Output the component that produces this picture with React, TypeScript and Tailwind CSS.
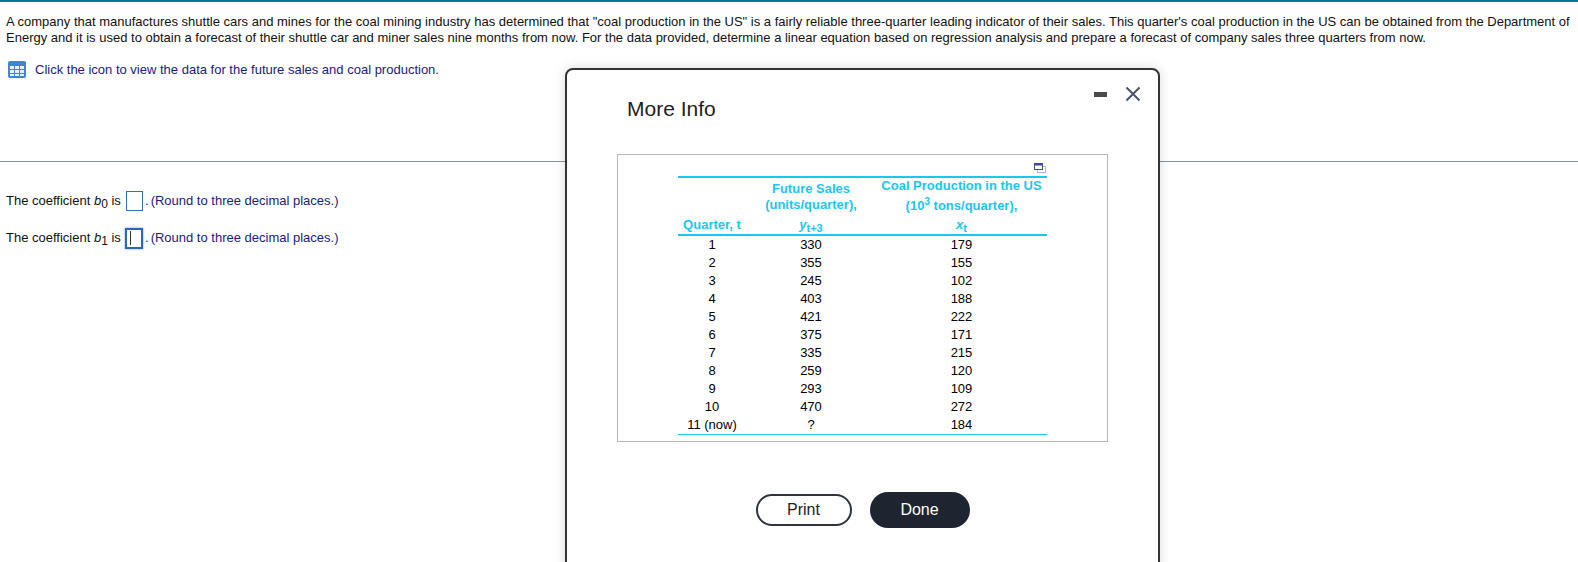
import React from 'react';

const rows = [
  ['1', '330', '179'],
  ['2', '355', '155'],
  ['3', '245', '102'],
  ['4', '403', '188'],
  ['5', '421', '222'],
  ['6', '375', '171'],
  ['7', '335', '215'],
  ['8', '259', '120'],
  ['9', '293', '109'],
  ['10', '470', '272'],
  ['11 (now)', '?', '184'],
];

const GridIcon = () => (
  <svg width="18" height="17" viewBox="0 0 18 17" className="shrink-0">
    <rect x="0" y="0" width="18" height="17" rx="2" fill="#3d85d8" />
    <g fill="#e8f1fb">
      <rect x="2" y="5" width="4" height="3" />
      <rect x="7" y="5" width="4" height="3" />
      <rect x="12" y="5" width="4" height="3" />
      <rect x="2" y="9" width="4" height="3" />
      <rect x="7" y="9" width="4" height="3" />
      <rect x="12" y="9" width="4" height="3" />
      <rect x="2" y="13" width="4" height="2" />
      <rect x="7" y="13" width="4" height="2" />
      <rect x="12" y="13" width="4" height="2" />
    </g>
  </svg>
);

const Coefficient = ({ sub, focused }: { sub: string; focused?: boolean }) => (
  <div className="flex h-[20px] items-center pl-[6px]">
    <span className="w-[115px] shrink-0 whitespace-nowrap text-[#111]">
      The coefficient <i>b</i>
      <sub className="text-[12px]">{sub}</sub> is
    </span>
    {focused ? (
      <span className="ml-[4px] flex h-[21px] w-[18px] items-center border-2 border-[#2f66b8] pl-[3px] shadow-[0_0_2px_#6c93d0]">
        <span className="h-[14px] w-px bg-[#333]" />
      </span>
    ) : (
      <span className="ml-[5px] h-[20px] w-[17px] border border-[#2f6fc4]" />
    )}
    <span className="ml-[2px] text-[#1a1a80]">
      <span>.</span>
      <span className="ml-[2px]">(Round to three decimal places.)</span>
    </span>
  </div>
);

const CopyIcon = () => (
  <svg width="12" height="10" viewBox="0 0 12 10">
    <rect x="3.5" y="3.5" width="8" height="6" fill="none" stroke="#b3b8d8" />
    <rect x="0.5" y="0.5" width="8" height="6" fill="#fff" stroke="#3f4a9e" />
    <rect x="0.5" y="0.5" width="8" height="2" fill="#3f4a9e" />
  </svg>
);

const MoreInfo = () => (
  <div className="absolute left-[565px] top-[68px] flex h-[520px] w-[595px] flex-col rounded-[8px] border-2 border-[#333] bg-white shadow-[0_0_12px_rgba(0,0,0,0.15)]">
    <div className="flex items-start justify-between pl-[60px] pr-[17px] pt-[26px]">
      <h2 className="text-[21px] leading-[26px] text-[#222]">More Info</h2>
      <div className="-mt-[10px] flex items-center gap-[18px]">
        <span className="h-[5px] w-[13px] bg-[#4a4a4a]" />
        <svg width="16" height="16" viewBox="0 0 16 16" stroke="#4a5568" strokeWidth="2" fill="none">
          <path d="M1.5 1.5 14.5 14.5M14.5 1.5 1.5 14.5" />
        </svg>
      </div>
    </div>
    <div className="ml-[50px] mt-[32px] h-[288px] w-[491px] border border-[#b8b8b8] pl-[60px] pt-[8px]">
      <div className="flex h-[13px] w-[369px] justify-end pr-[1px]">
        <CopyIcon />
      </div>
      <table className="w-[369px] table-fixed border-collapse text-center text-[13px] leading-[18px] text-black">
        <thead className="border-b-2 border-t-2 border-[#1ac6f2] text-[#1ac6f2]">
          <tr className="h-[58px] align-bottom">
            <th className="w-[68px] font-bold">Quarter, t</th>
            <th className="w-[130px] font-bold">
              <div className="leading-[16px]">Future Sales</div>
              <div className="mb-[3px] leading-[16px]">(units/quarter),</div>
              <div className="leading-[18px]">
                <i>y</i>
                <sub className="text-[11px]">t+3</sub>
              </div>
            </th>
            <th className="font-bold">
              <div className="mb-[5px] leading-[15px]">Coal Production in the US</div>
              <div className="mb-[2px] leading-[16px]">
                (10<sup className="text-[10px]">3</sup> tons/quarter),
              </div>
              <div className="leading-[18px]">
                <i>x</i>
                <sub className="text-[11px]">t</sub>
              </div>
            </th>
          </tr>
        </thead>
        <tbody className="border-b border-[#1ac6f2]">
          {rows.map((row) => (
            <tr key={row[0]} className="h-[18px]">
              <td>{row[0]}</td>
              <td>{row[1]}</td>
              <td>{row[2]}</td>
            </tr>
          ))}
        </tbody>
      </table>
    </div>
    <div className="mt-[50px] flex items-center justify-center gap-[18px]">
      <button className="h-[32px] w-[96px] rounded-full border-2 border-[#2d3340] bg-white text-[16px] text-[#222]">
        Print
      </button>
      <button className="h-[36px] w-[100px] rounded-full bg-[#1e2530] text-[16px] text-white">Done</button>
    </div>
  </div>
);

export default function App() {
  return (
    <div className="relative h-[562px] w-[1578px] overflow-hidden bg-white font-['Liberation_Sans',Arial,sans-serif] text-[13px] leading-[16px]">
      <div className="h-[2px] bg-[#00769f]" />
      <div className="px-[6px] pt-[12px] text-[#111]">
        <p>
          A company that manufactures shuttle cars and mines for the coal mining industry has determined that "coal
          production in the US" is a fairly reliable three-quarter leading indicator of their sales. This quarter's
          coal production in the US can be obtained from the Department of Energy and it is used to obtain a forecast
          of their shuttle car and miner sales nine months from now. For the data provided, determine a linear
          equation based on regression analysis and prepare a forecast of company sales three quarters from now.
        </p>
      </div>
      <div className="mt-[15px] flex items-center gap-[9px] pl-[8px] text-[#1a1a80]">
        <GridIcon />
        <span>Click the icon to view the data for the future sales and coal production.</span>
      </div>
      <hr className="mt-[83px] border-0 border-t border-[#8a929a]" />
      <div className="mt-[29px] flex flex-col gap-[17px]">
        <Coefficient sub="0" />
        <Coefficient sub="1" focused />
      </div>
      <MoreInfo />
    </div>
  );
}
